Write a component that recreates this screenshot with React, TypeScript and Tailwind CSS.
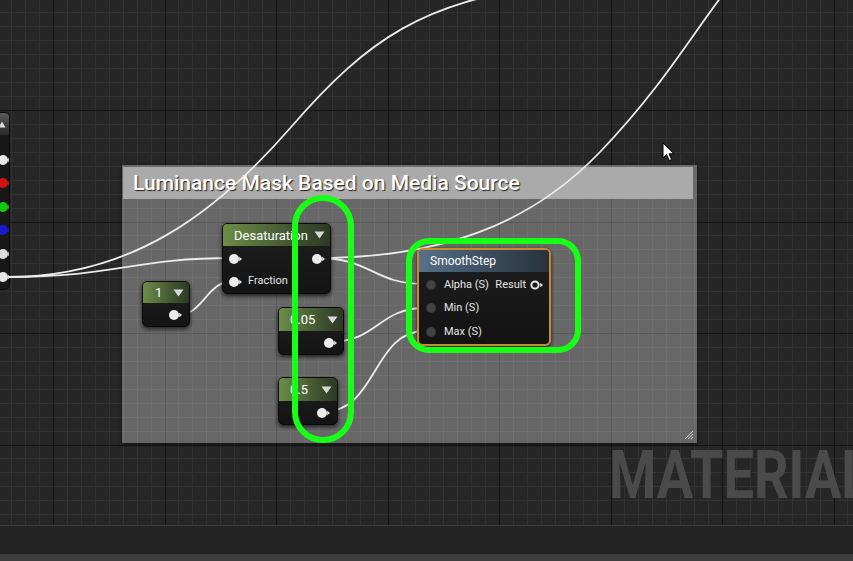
import React from "react";

const W = 853;
const H = 525;
const MAJOR = 111.5;
const MINOR = MAJOR / 8;

function Grid() {
  const xs: { v: number; major: boolean }[] = [];
  for (let i = -8; 53 + i * MINOR < W; i++) xs.push({ v: 53 + i * MINOR, major: i % 8 === 0 });
  const ys: { v: number; major: boolean }[] = [];
  for (let i = -8; 110 + i * MINOR < H; i++) ys.push({ v: 110 + i * MINOR, major: i % 8 === 0 });
  return (
    <svg className="absolute inset-0" width={W} height={H} shapeRendering="crispEdges">
      {xs.filter((l) => !l.major).map((l) => (
        <line key={"vx" + l.v} x1={Math.round(l.v) + 0.5} x2={Math.round(l.v) + 0.5} y1={0} y2={H} stroke="#323232" />
      ))}
      {ys.filter((l) => !l.major).map((l) => (
        <line key={"hy" + l.v} y1={Math.round(l.v) + 0.5} y2={Math.round(l.v) + 0.5} x1={0} x2={W} stroke="#323232" />
      ))}
      {xs.filter((l) => l.major).map((l) => (
        <line key={"mx" + l.v} x1={Math.round(l.v) + 0.5} x2={Math.round(l.v) + 0.5} y1={0} y2={H} stroke="#141414" />
      ))}
      {ys.filter((l) => l.major).map((l) => (
        <line key={"my" + l.v} y1={Math.round(l.v) + 0.5} y2={Math.round(l.v) + 0.5} x1={0} x2={W} stroke="#141414" />
      ))}
    </svg>
  );
}

const Pin = ({ color = "#ececec", hollow = false }: { color?: string; hollow?: boolean }) => (
  <svg width="14" height="10" viewBox="0 0 14 10" className="shrink-0">
    {hollow ? (
      <circle cx="5" cy="5" r="3.6" fill="none" stroke="#e8e8e8" strokeWidth="2" />
    ) : (
      <circle cx="5" cy="5" r="5" fill={color} />
    )}
    <path d="M10.2 2.8 L13 5 L10.2 7.2 Z" fill={hollow ? "#e8e8e8" : color} />
  </svg>
);

const DimPin = () => (
  <svg width="12" height="12" viewBox="0 0 12 12" className="shrink-0">
    <circle cx="6" cy="6" r="5" fill="#3b3b3b" />
    <circle cx="6" cy="6" r="3.5" fill="#444" />
  </svg>
);

const Arrow = () => (
  <svg width="11" height="8" viewBox="0 0 11 8" className="shrink-0">
    <path d="M0.5 0.5 H10.5 L5.5 7.5 Z" fill="#d8d8d8" />
  </svg>
);

function Wires() {
  const s = { stroke: "#ececec", strokeWidth: 1.8, fill: "none" };
  return (
    <svg className="absolute inset-0 pointer-events-none" width={W} height={H}>
      <path {...s} d="M8 277 C 130 277, 215 215, 292 126 S 425 2, 545 -14" />
      <path {...s} d="M8 277 C 120 277, 130 258, 234 258" />
      <path {...s} d="M174 316 C 205 316, 205 281, 234 281" />
      <path {...s} d="M317 258 C 440 258, 530 225, 600 152 S 700 20, 742 -30" />
      <path {...s} d="M317 258 C 372 258, 372 284, 425 284" />
      <path {...s} d="M329 342 C 378 342, 378 308, 425 308" />
      <path {...s} d="M322 412 C 378 412, 372 331, 425 331" />
    </svg>
  );
}

function Highlights() {
  return (
    <svg className="absolute inset-0 pointer-events-none" width={W} height={H}>
      <rect x="295" y="198" width="56" height="242" rx="28" fill="none" stroke="#17ff17" strokeWidth="6" />
      <rect x="409" y="241" width="169" height="109" rx="20" fill="none" stroke="#17ff17" strokeWidth="6" />
    </svg>
  );
}

const nodeShell =
  "absolute rounded-[5px] border border-[#0a0a0a] bg-gradient-to-b from-[#1f1f1f] to-[#141414] shadow-[0_2px_4px_rgba(0,0,0,0.7)] overflow-hidden flex flex-col";
const greenHead =
  "shrink-0 flex items-center justify-between bg-gradient-to-r from-[#6c8d48] via-[#4a6136] to-[#2c3924] text-[13px] text-white leading-none";

export default function App() {
  return (
    <div className="w-[853px] h-[561px] flex flex-col bg-[#262626] overflow-hidden font-['Roboto','Liberation_Sans',sans-serif] select-none">
      <div className="relative h-[525px] shrink-0 overflow-hidden">
        <Grid />

        <div className="absolute left-[609px] top-[443px] text-[66px] leading-none font-bold text-[#4a4a4a] whitespace-nowrap origin-left scale-x-[0.82]">
          MATERIAL
        </div>

        {/* comment box */}
        <div className="absolute left-[122px] top-[165px] w-[575px] h-[278px] bg-[rgba(255,255,255,0.3)] pt-[2px] pl-[1px] pr-[4px] shadow-[0_1px_3px_rgba(0,0,0,0.6)]">
          <div className="h-[32px] bg-[#aaaaaa] flex items-center pl-[10px] pt-[2px] text-[21px] font-medium text-white [text-shadow:1px_1px_1px_rgba(0,0,0,0.8)]">
            Luminance Mask Based on Media Source
          </div>
          <svg className="absolute right-[3px] bottom-[3px]" width="10" height="10" viewBox="0 0 10 10">
            <path d="M9 1 L1 9 M9 4 L4 9 M9 7 L7 9" stroke="#d0d0d0" strokeWidth="1" />
          </svg>
        </div>

        {/* partially visible node on the left edge */}
        <div className="absolute left-[-20px] top-[112px] w-[30px] h-[178px] rounded-[5px] border border-[#0a0a0a] bg-[#181818] overflow-hidden flex flex-col">
          <div className="h-[22px] shrink-0 bg-gradient-to-b from-[#5a5a5a] to-[#2a2a2a] flex items-center pl-[17px]">
            <svg width="8" height="7" viewBox="0 0 8 7">
              <path d="M4 0.5 L7.5 6.5 H0.5 Z" fill="#dcdcdc" />
            </svg>
          </div>
          <div className="flex flex-col pl-[17px] pt-[20px] gap-[13.4px]">
            <Pin color="#e6e6e6" />
            <Pin color="#d01212" />
            <Pin color="#14c814" />
            <Pin color="#1a1ad0" />
            <Pin color="#dcdcdc" />
            <Pin color="#e6e6e6" />
          </div>
        </div>

        <Wires />

        {/* Desaturation */}
        <div className={nodeShell + " left-[222px] top-[223px] w-[109px] h-[71px]"}>
          <div className={greenHead + " h-[22px] pl-[11px] pr-[5px] text-[12px]"}>
            <span>Desaturation</span>
            <Arrow />
          </div>
          <div className="h-[23px] mt-[1px] flex items-center justify-between pl-[6px] pr-[4px]">
            <Pin />
            <Pin />
          </div>
          <div className="h-[23px] flex items-center gap-[5px] pl-[6px] text-[11px] text-[#e6e6e6]">
            <Pin />
            <span>Fraction</span>
          </div>
        </div>

        {/* Constant 1 */}
        <div className={nodeShell + " left-[142px] top-[281px] w-[48px] h-[46px]"}>
          <div className={greenHead + " h-[21px] pl-[12px] pr-[5px]"}>
            <span>1</span>
            <Arrow />
          </div>
          <div className="flex-1 flex items-center justify-end pr-[6px]">
            <Pin />
          </div>
        </div>

        {/* Constant 0.05 */}
        <div className={nodeShell + " left-[278px] top-[307px] w-[66px] h-[48px]"}>
          <div className={greenHead + " h-[23px] pl-[11px] pr-[5px]"}>
            <span>0.05</span>
            <Arrow />
          </div>
          <div className="flex-1 flex items-center justify-end pr-[5px]">
            <Pin />
          </div>
        </div>

        {/* Constant 0.5 */}
        <div className={nodeShell + " left-[278px] top-[377px] w-[60px] h-[48px]"}>
          <div className={greenHead + " h-[23px] pl-[11px] pr-[5px]"}>
            <span>0.5</span>
            <Arrow />
          </div>
          <div className="flex-1 flex items-center justify-end pr-[6px]">
            <Pin />
          </div>
        </div>

        {/* SmoothStep */}
        <div className="absolute left-[417px] top-[248px] w-[134px] h-[98px] rounded-[6px] border-2 border-[#c88a2e] bg-gradient-to-b from-[#1e1e1e] to-[#131313] shadow-[0_2px_4px_rgba(0,0,0,0.7)] overflow-hidden flex flex-col">
          <div className="h-[22px] shrink-0 flex items-center pl-[11px] bg-gradient-to-r from-[#587189] via-[#3c4e60] to-[#28323d] text-[12px] text-white">
            SmoothStep
          </div>
          <div className="flex flex-col pt-[1px] text-[11px] text-[#e4e4e4]">
            <div className="h-[23.5px] flex items-center pl-[6px] pr-[5px]">
              <DimPin />
              <span className="ml-[7px]">Alpha (S)</span>
              <span className="ml-auto mr-[4px]">Result</span>
              <Pin hollow />
            </div>
            <div className="h-[23.5px] flex items-center pl-[6px]">
              <DimPin />
              <span className="ml-[7px]">Min (S)</span>
            </div>
            <div className="h-[23.5px] flex items-center pl-[6px]">
              <DimPin />
              <span className="ml-[7px]">Max (S)</span>
            </div>
          </div>
        </div>

        <Highlights />

        {/* mouse cursor */}
        <svg className="absolute left-[662px] top-[142px]" width="14" height="20" viewBox="0 0 14 20">
          <path d="M1 1 L1 16 L4.6 12.6 L7.3 18.6 L9.6 17.6 L7 11.8 L12 11.8 Z" fill="#ffffff" stroke="#000000" strokeWidth="1" strokeLinejoin="round" />
        </svg>
      </div>
      <div className="h-[1px] shrink-0 bg-[#3c3c3c]" />
      <div className="h-[28px] shrink-0 bg-[#232323]" />
      <div className="flex-1 bg-[#3e3e3e]" />
    </div>
  );
}
